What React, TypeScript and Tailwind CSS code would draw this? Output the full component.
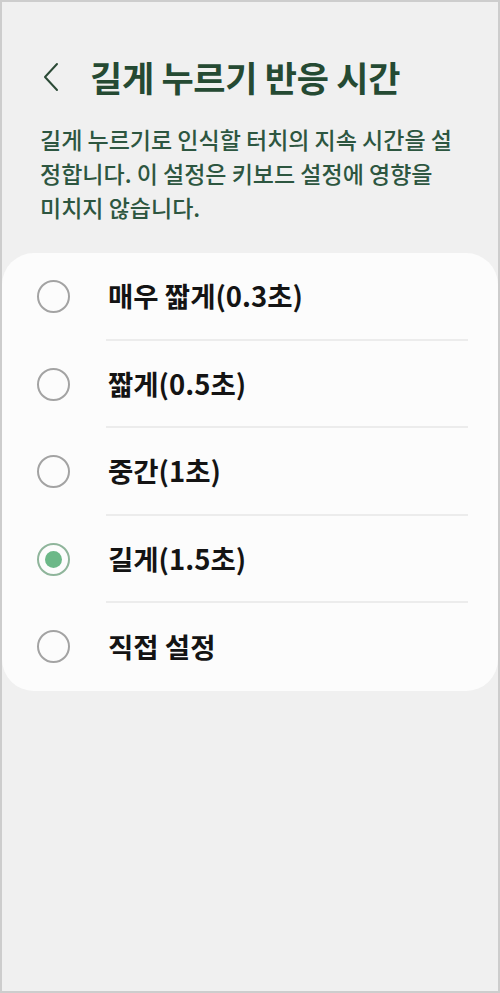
const font = { fontFamily: '"Noto Sans CJK KR", "Noto Sans", sans-serif' };

const options = [
  { label: "매우 짧게(0.3초)", checked: false },
  { label: "짧게(0.5초)", checked: false },
  { label: "중간(1초)", checked: false },
  { label: "길게(1.5초)", checked: true },
  { label: "직접 설정", checked: false },
];

function Radio({ checked }: { checked: boolean }) {
  if (checked) {
    return (
      <span className="flex h-[33px] w-[33px] items-center justify-center rounded-full border-2 border-[#8fb59b]">
        <span className="h-[17px] w-[17px] rounded-full bg-[#6cb888]" />
      </span>
    );
  }
  return <span className="block h-[33px] w-[33px] rounded-full border-2 border-[#a3a3a3]" />;
}

export default function App() {
  return (
    <div
      style={font}
      className="flex h-[993px] w-[500px] flex-col border-2 border-[#cdcdcd] bg-[#f0f0f0]"
    >
      {/* header */}
      <div className="flex items-center pt-[55px] pl-[39px]">
        <svg width="20" height="30" viewBox="0 0 20 30" fill="none">
          <path d="M16 2 L4 15 L16 28" stroke="#2b4a36" strokeWidth="2" strokeLinecap="round" strokeLinejoin="round" />
        </svg>
        <h1 className="ml-[29px] text-[35px] font-bold leading-[40px] tracking-[-0.3px] text-[#254a33]">
          길게 누르기 반응 시간
        </h1>
      </div>

      <p className="mt-[25px] px-[38px] text-[23px] font-medium leading-[34px] text-[#2d5640]">
        길게 누르기로 인식할 터치의 지속 시간을 설<br />
        정합니다. 이 설정은 키보드 설정에 영향을<br />
        미치지 않습니다.
      </p>

      <div className="mt-[29px] rounded-[32px] bg-[#fcfcfc]">
        {options.map((o, i) => (
          <div key={o.label} className="flex h-[87.5px] items-center">
            <div className="flex w-[104px] justify-center pr-[2px]">
              <Radio checked={o.checked} />
            </div>
            <div
              className={
                "mr-[30px] flex h-full flex-1 items-center " +
                (i < options.length - 1 ? "border-b-2 border-[#ececec]" : "")
              }
            >
              <span className="ml-[2px] text-[27.5px] font-bold leading-none text-[#141414]">{o.label}</span>
            </div>
          </div>
        ))}
      </div>
    </div>
  );
}
